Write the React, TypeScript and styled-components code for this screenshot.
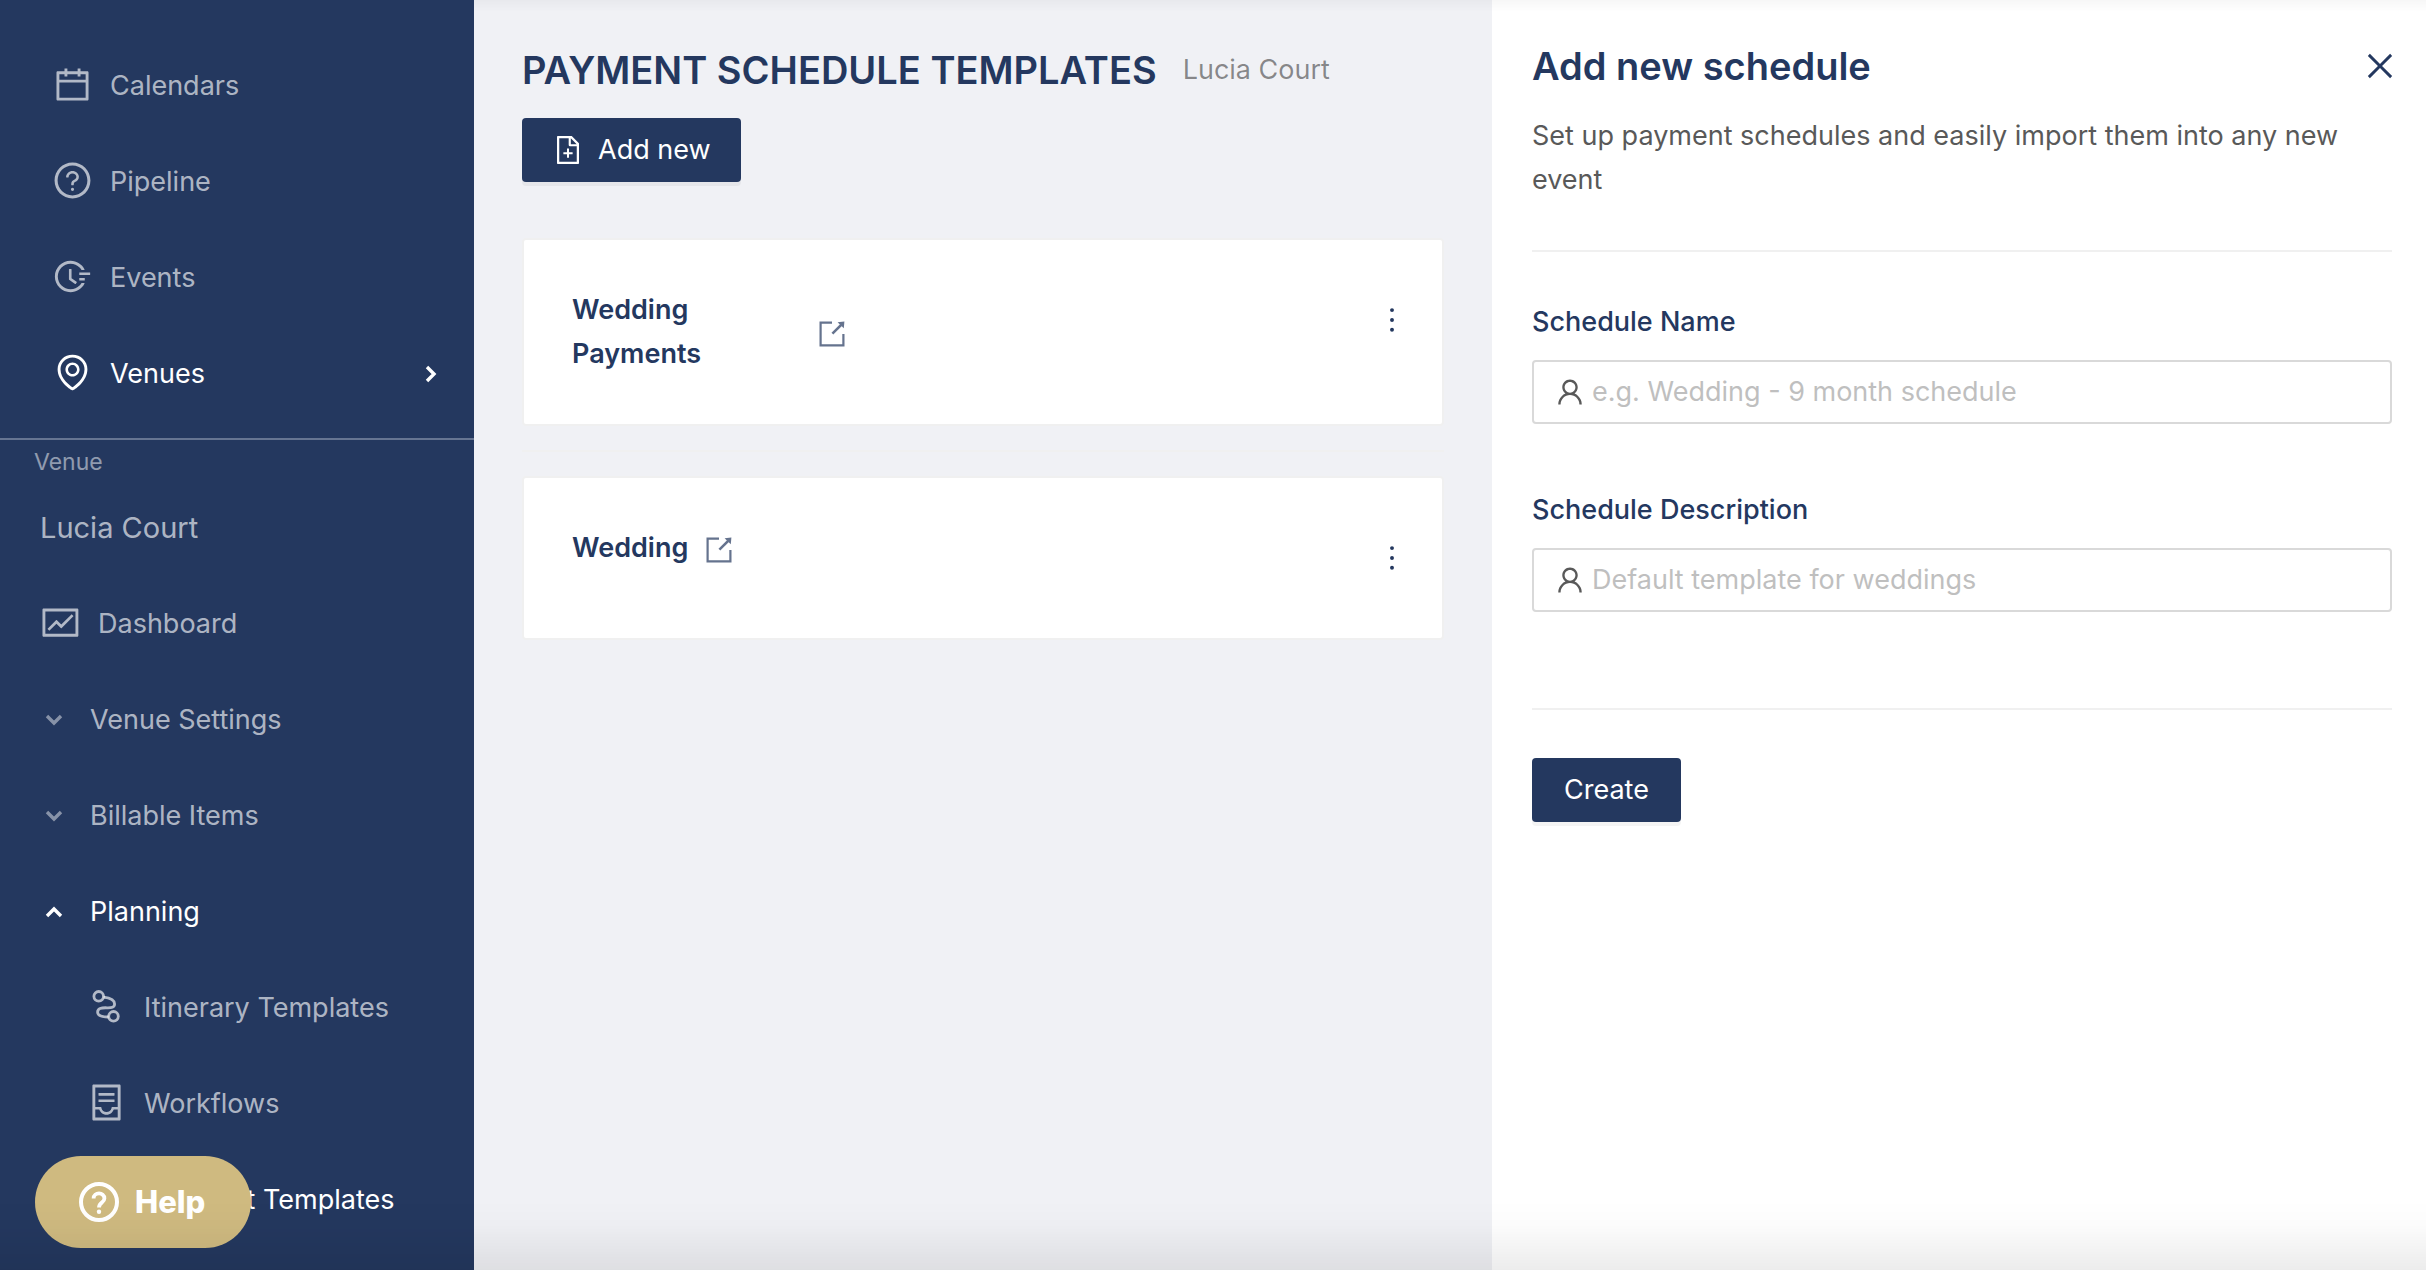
import React from "react";
import styled, { createGlobalStyle } from "styled-components";
import {
  AiOutlineCalendar,
  AiOutlineClose,
  AiOutlineContainer,
  AiOutlineEnvironment,
  AiOutlineFieldTime,
  AiOutlineFileAdd,
  AiOutlineFund,
  AiOutlineMore,
  AiOutlineQuestionCircle,
  AiOutlineUser,
} from "react-icons/ai";

const navy = "#24385f";
const fontStack = `Inter, "Liberation Sans", sans-serif`;

const GlobalStyle = createGlobalStyle`
  *, *::before, *::after { box-sizing: border-box; }
  body {
    margin: 0;
    background: #f0f1f5;
    color: ${navy};
    font-family: ${fontStack};
    font-size: 27px;
    line-height: 44px;
  }
  h1, h2, h3, p, ul { margin: 0; padding: 0; }
  ul { list-style: none; }
  button, input { font: inherit; }
  svg { display: block; flex: none; }
`;

const Page = styled.div`
  display: flex;
  height: 100vh;
  overflow: hidden;
`;

/* ---------- Sidebar ---------- */

const Sidebar = styled.nav`
  flex: none;
  width: 474px;
  padding-top: 38px;
  overflow: hidden;
  background: ${navy};
`;

const VenueSection = styled.section`
  margin-top: 16px;
  border-top: 2px solid #667592;
`;

const SectionLabel = styled.h2`
  height: 40px;
  padding: 0 34px;
  color: rgba(255, 255, 255, 0.5);
  font-size: 23px;
  font-weight: 400;
`;

const NavLink = styled.a<{ $indent: number; $active?: boolean }>`
  display: flex;
  align-items: center;
  gap: 17px;
  height: 96px;
  padding: 0 34px 0 ${(p) => p.$indent}px;
  color: ${(p) => (p.$active ? "#fff" : "rgba(255, 255, 255, 0.65)")};
  text-decoration: none;
  white-space: nowrap;
`;

const VenueLink = styled(NavLink)`
  font-size: 29px;
`;

const NavIcon = styled.span`
  display: flex;
  padding-bottom: 4px;
  font-size: 41px;
`;

const NavText = styled.span`
  flex: 1;
`;

const GroupLink = styled(NavLink)`
  gap: 26px;
`;

const Chevron = styled.svg<{ $dim?: boolean }>`
  opacity: ${(p) => (p.$dim ? 0.7 : 1)};
`;

const HelpButton = styled.button`
  position: fixed;
  left: 35px;
  bottom: 22px;
  display: flex;
  align-items: center;
  gap: 16px;
  height: 92px;
  padding: 0 46px 0 44px;
  border: 0;
  border-radius: 46px;
  background: #cfba80;
  color: #fff;
  font-size: 31px;
  font-weight: 800;
`;

/* ---------- Main column ---------- */

const Main = styled.main`
  flex: 1;
  min-width: 0;
  padding: 48px;
`;

const TitleRow = styled.header`
  display: flex;
  align-items: center;
  gap: 26px;
  height: 44px;
  margin-bottom: 26px;
  white-space: nowrap;
`;

const PageTitle = styled.h1`
  font-size: 38px;
  font-weight: 600;
`;

const Subtitle = styled.span`
  color: rgba(0, 0, 0, 0.45);
`;

const PrimaryButton = styled.button<{ $withIcon?: boolean }>`
  display: inline-flex;
  align-items: center;
  gap: 14px;
  height: 64px;
  padding: 0 ${(p) => (p.$withIcon ? 30 : 32)}px;
  border: 0;
  border-radius: 4px;
  background: ${navy};
  box-shadow: 0 4px 0 rgba(0, 0, 0, 0.045);
  color: #fff;
`;

const CardList = styled.ul`
  display: flex;
  flex-direction: column;
  margin-top: 56px;
`;

const CardItem = styled.li`
  & + & {
    margin-top: 24px;
    padding-top: 24px;
    border-top: 2px solid #f0f0f0;
  }
`;

const Card = styled.article`
  display: flex;
  align-items: flex-start;
  justify-content: space-between;
  padding: 48px 32px 48px 48px;
  border: 2px solid #f0f0f0;
  border-radius: 4px;
  background: #fff;
`;

const CardLink = styled.a`
  display: flex;
  align-items: center;
  gap: 18px;
  color: ${navy};
  text-decoration: none;
`;

const CardName = styled.h3`
  max-width: 229px;
  font-size: 27px;
  font-weight: 600;
`;

const OpenMark = styled.span`
  padding-top: 4px;
  opacity: 0.7;
`;

const MenuButton = styled.button`
  display: flex;
  align-items: center;
  height: 64px;
  padding: 0;
  border: 0;
  background: none;
  color: ${navy};
`;

/* ---------- Drawer ---------- */

const Drawer = styled.aside`
  flex: none;
  width: 934px;
  padding: 44px 34px 48px 40px;
  background: #fff;
`;

const DrawerHead = styled.div`
  display: flex;
  align-items: center;
  justify-content: space-between;
  height: 44px;
`;

const DrawerTitle = styled.h2`
  font-size: 38px;
  font-weight: 600;
`;

const CloseButton = styled.button`
  display: flex;
  margin-right: -6px;
  padding: 0;
  border: 0;
  background: none;
  color: ${navy};
`;

const Description = styled.p`
  margin-top: 26px;
  color: #595959;
`;

const Divider = styled.hr`
  margin: 48px 0;
  border: 0;
  border-top: 2px solid #f0f0f0;
`;

const Form = styled.form`
  display: flex;
  flex-direction: column;
`;

const Field = styled.div`
  display: flex;
  flex-direction: column;
  gap: 16px;
  margin-bottom: 64px;
`;

const Label = styled.label`
  font-weight: 500;
`;

const InputBox = styled.div`
  display: flex;
  align-items: center;
  gap: 6px;
  height: 64px;
  padding: 0 20px;
  border: 2px solid #d9d9d9;
  border-radius: 4px;
  color: #595959;
`;

const Input = styled.input`
  flex: 1;
  min-width: 0;
  padding: 0;
  border: 0;
  outline: 0;
  background: none;
  color: #595959;

  &::placeholder {
    color: #bfbfbf;
    opacity: 1;
  }
`;

const FormEnd = styled.div`
  margin-top: -16px;
`;

/* ---------- Edge shading ---------- */

const TopShade = styled.div`
  position: fixed;
  inset: 0 0 auto 474px;
  height: 12px;
  background: linear-gradient(rgba(0, 0, 0, 0.03), transparent);
  pointer-events: none;
`;

const BottomShade = styled.div`
  position: fixed;
  inset: auto 0 0 0;
  height: 70px;
  background: linear-gradient(transparent, rgba(0, 0, 0, 0.012) 35%, rgba(0, 0, 0, 0.075));
  pointer-events: none;
`;

/* ---------- Icons ---------- */

const chevronPaths = {
  down: "M3 6 L10 13 L17 6",
  up: "M3 14 L10 7 L17 14",
  right: "M7 3 L14 10 L7 17",
};

function ChevronIcon({ to, dim }: { to: keyof typeof chevronPaths; dim?: boolean }) {
  return (
    <Chevron $dim={dim} width="20" height="20" viewBox="0 0 20 20" fill="none" aria-hidden="true">
      <path d={chevronPaths[to]} stroke="currentColor" strokeWidth="3.4" />
    </Chevron>
  );
}

function RouteIcon() {
  return (
    <svg width="41" height="41" viewBox="0 0 41 41" fill="none" stroke="currentColor" strokeWidth="2.8" aria-hidden="true">
      <circle cx="12.7" cy="10.3" r="4.8" />
      <circle cx="27.5" cy="30.3" r="4.8" />
      <path d="M17.5 11.2 C24 12 28.6 14.2 28.6 18 C28.6 21.6 25.5 21.9 21 21.8 C15 21.6 11.6 22.4 11.6 26.2 C11.6 30 16 31 22.7 31" />
    </svg>
  );
}

function OpenIcon() {
  return (
    <svg width="26" height="26" viewBox="0 0 26 26" fill="none" stroke="currentColor" strokeWidth="2.2" aria-hidden="true">
      <path d="M13 1.6 H1.6 V24.4 H24.4 V13" />
      <path d="M13.4 12.6 L22.2 3.8" strokeWidth="2.6" />
      <path d="M18.6 1.2 L25.4 0.4 L24.8 7.2 Z" fill="currentColor" stroke="none" />
    </svg>
  );
}

function HelpIcon() {
  return (
    <svg width="40" height="40" viewBox="0 0 40 40" fill="none" stroke="#fff" aria-hidden="true">
      <circle cx="20" cy="20" r="18" strokeWidth="4" />
      <path d="M14.6 16.6 C14.6 9.8 25.4 9.8 25.4 16.4 C25.4 20.6 20 20.4 20 25.4" strokeWidth="3.8" />
      <circle cx="20" cy="29.8" r="2.2" fill="#fff" stroke="none" />
    </svg>
  );
}

/* ---------- Data ---------- */

const topItems = [
  { label: "Calendars", icon: <AiOutlineCalendar /> },
  { label: "Pipeline", icon: <AiOutlineQuestionCircle /> },
  { label: "Events", icon: <AiOutlineFieldTime /> },
  { label: "Venues", icon: <AiOutlineEnvironment />, active: true },
];

const groups = [
  { label: "Venue Settings", open: false },
  { label: "Billable Items", open: false },
  { label: "Planning", open: true },
];

const planningItems = [
  { label: "Itinerary Templates", icon: <RouteIcon /> },
  { label: "Workflows", icon: <AiOutlineContainer /> },
  { label: "Payment Templates", icon: <AiOutlineFund />, active: true },
];

const templates = ["Wedding Payments", "Wedding"];

const fields = [
  { id: "schedule-name", label: "Schedule Name", placeholder: "e.g. Wedding - 9 month schedule" },
  { id: "schedule-description", label: "Schedule Description", placeholder: "Default template for weddings" },
];

export default function App() {
  return (
    <>
      <GlobalStyle />
      <Page>
        <Sidebar>
          <ul>
            {topItems.map((item) => (
              <li key={item.label}>
                <NavLink href="#" $indent={52} $active={item.active}>
                  <NavIcon>{item.icon}</NavIcon>
                  <NavText>{item.label}</NavText>
                  {item.active && <ChevronIcon to="right" />}
                </NavLink>
              </li>
            ))}
          </ul>
          <VenueSection>
            <SectionLabel>Venue</SectionLabel>
            <VenueLink href="#" $indent={40}>Lucia Court</VenueLink>
            <NavLink href="#" $indent={40}>
              <NavIcon><AiOutlineFund /></NavIcon>
              <NavText>Dashboard</NavText>
            </NavLink>
            {groups.map((group) => (
              <GroupLink key={group.label} href="#" $indent={44} $active={group.open}>
                <ChevronIcon to={group.open ? "up" : "down"} dim={!group.open} />
                <NavText>{group.label}</NavText>
              </GroupLink>
            ))}
            <ul>
              {planningItems.map((item) => (
                <li key={item.label}>
                  <NavLink href="#" $indent={86} $active={item.active}>
                    <NavIcon>{item.icon}</NavIcon>
                    <NavText>{item.label}</NavText>
                  </NavLink>
                </li>
              ))}
            </ul>
          </VenueSection>
        </Sidebar>

        <Main>
          <TitleRow>
            <PageTitle>PAYMENT SCHEDULE TEMPLATES</PageTitle>
            <Subtitle>Lucia Court</Subtitle>
          </TitleRow>
          <PrimaryButton type="button" $withIcon>
            <AiOutlineFileAdd size={32} />
            Add new
          </PrimaryButton>
          <CardList>
            {templates.map((name) => (
              <CardItem key={name}>
                <Card>
                  <CardLink href="#">
                    <CardName>{name}</CardName>
                    <OpenMark><OpenIcon /></OpenMark>
                  </CardLink>
                  <MenuButton type="button" aria-label={`Actions for ${name}`}>
                    <AiOutlineMore size={36} />
                  </MenuButton>
                </Card>
              </CardItem>
            ))}
          </CardList>
        </Main>

        <Drawer>
          <DrawerHead>
            <DrawerTitle>Add new schedule</DrawerTitle>
            <CloseButton type="button" aria-label="Close">
              <AiOutlineClose size={36} />
            </CloseButton>
          </DrawerHead>
          <Description>
            Set up payment schedules and easily import them into any new event
          </Description>
          <Divider />
          <Form>
            {fields.map((field) => (
              <Field key={field.id}>
                <Label htmlFor={field.id}>{field.label}</Label>
                <InputBox>
                  <AiOutlineUser size={32} />
                  <Input id={field.id} type="text" placeholder={field.placeholder} />
                </InputBox>
              </Field>
            ))}
            <FormEnd>
              <Divider />
              <PrimaryButton type="submit">Create</PrimaryButton>
            </FormEnd>
          </Form>
        </Drawer>
      </Page>
      <HelpButton type="button">
        <HelpIcon />
        Help
      </HelpButton>
      <TopShade />
      <BottomShade />
    </>
  );
}
